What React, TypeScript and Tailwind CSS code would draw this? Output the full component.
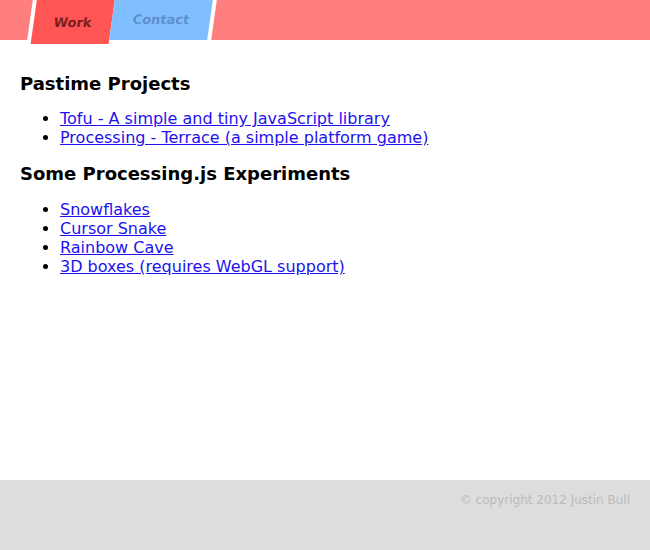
const PASTIME = [
  'Tofu - A simple and tiny JavaScript library',
  'Processing - Terrace (a simple platform game)',
];

const EXPERIMENTS = ['Snowflakes', 'Cursor Snake', 'Rainbow Cave', '3D boxes (requires WebGL support)'];

function Section({ title, links }: { title: string; links: string[] }) {
  return (
    <div>
      <h3 className="text-lg font-bold leading-[1.2] text-black mb-[14.5px]">{title}</h3>
      <ul className="list-disc pl-10 mb-4 leading-[1.2]">
        {links.map(l => (
          <li key={l}>
            <a href="#" className="text-[#2211ee] underline">{l}</a>
          </li>
        ))}
      </ul>
    </div>
  );
}

export default function App() {
  return (
    <div className="h-screen overflow-hidden flex flex-col bg-white font-['DejaVu_Sans',sans-serif] text-base">
      <header className="h-10 shrink-0">
        <nav className="flex items-start h-10 -mx-5 skew-x-[-8deg]">
          <div className="w-[50px] h-10 bg-[#ff7f7f]" />
          <a href="#" className="ml-1 w-[78px] h-[44px] bg-[#ff5555] text-center pt-[15px] text-[13px] leading-[15px] font-bold text-[#7a2020]">Work</a>
          <a href="#" className="w-[98px] h-10 bg-[#80bfff] text-center pt-[12px] text-[13px] leading-[15px] font-bold text-[#5f90cc]">Contact</a>
          <div className="ml-1 flex-1 h-10 bg-[#ff7f7f]" />
        </nav>
      </header>

      <main className="flex-1 px-5 pt-[33px]">
        <Section title="Pastime Projects" links={PASTIME} />
        <Section title="Some Processing.js Experiments" links={EXPERIMENTS} />
      </main>

      <footer className="h-[70px] shrink-0 bg-[#dddddd] px-5 pt-[13px] text-right text-xs leading-[14px] text-[#bbbbbb]">
        © copyright 2012 Justin Bull
      </footer>
    </div>
  );
}
